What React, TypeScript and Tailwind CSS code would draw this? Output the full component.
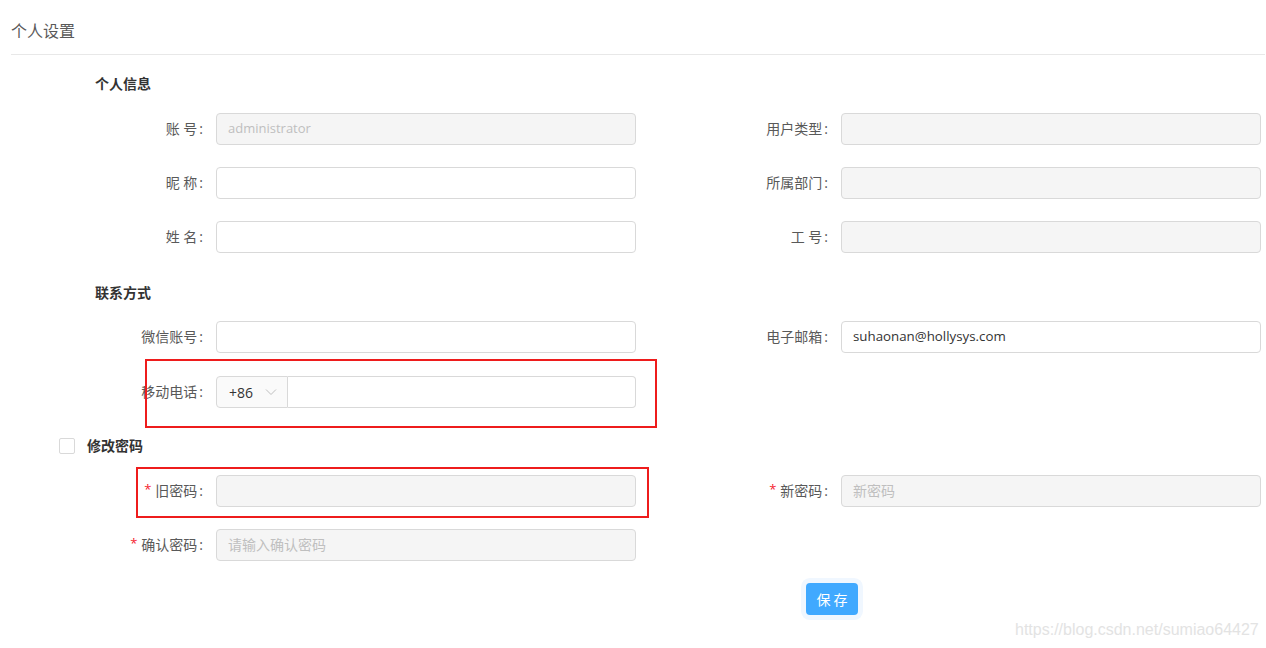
import React from "react";

const FONT = '"Open Sans", "Noto Sans CJK SC", sans-serif';

function Label({ text, required }: { text: string; required?: boolean }) {
  return (
    <div className="flex items-center justify-end pr-[13px] pb-[2px] text-[14px] text-[#595959] whitespace-pre">
      {required && <span className="text-[#f5222d] mr-[4px] text-[13px]">*</span>}
      <span>{text}</span>
      <span className="ml-[2px]">:</span>
    </div>
  );
}

function Input({
  disabled,
  value,
  placeholder,
  cjk,
}: {
  disabled?: boolean;
  value?: string;
  placeholder?: string;
  cjk?: boolean;
}) {
  return (
    <div
      className={
        "h-[32px] rounded-[4px] border border-[#d9d9d9] flex items-center px-[11px] " +
        (cjk ? "text-[14px] pb-[1px] " : "text-[13px] ") +
        (disabled ? "bg-[#f5f5f5]" : "bg-white")
      }
    >
      {value ? (
        <span className="text-[#333] text-[13.3px]">{value}</span>
      ) : placeholder ? (
        <span className="text-[#bfbfbf]">{placeholder}</span>
      ) : null}
    </div>
  );
}

function Row({ children, className = "" }: { children: React.ReactNode; className?: string }) {
  return <div className={"grid grid-cols-[216px_420px_205px_420px] h-[32px] " + className}>{children}</div>;
}

function Empty() {
  return <div />;
}

export default function App() {
  return (
    <div className="relative w-[1266px] h-[648px] bg-white overflow-hidden" style={{ fontFamily: FONT }}>
      <div className="ml-[11px] mr-[1px] pt-[20px] pb-[12px] border-b border-[#e8e8e8]">
        <div className="text-[16px] leading-[22px] text-[#595959]">个人设置</div>
      </div>

      <div className="mt-[19px] pl-[95px] text-[14px] leading-[20px] font-bold text-[#333]">个人信息</div>

      <Row className="mt-[19px]">
        <Label text="账 号" />
        <Input disabled placeholder="administrator" />
        <Label text="用户类型" />
        <Input disabled />
      </Row>
      <Row className="mt-[22px]">
        <Label text="昵 称" />
        <Input />
        <Label text="所属部门" />
        <Input disabled />
      </Row>
      <Row className="mt-[22px]">
        <Label text="姓 名" />
        <Input />
        <Label text="工 号" />
        <Input disabled />
      </Row>

      <div className="mt-[30px] pl-[95px] text-[14px] leading-[20px] font-bold text-[#333]">联系方式</div>

      <Row className="mt-[18px]">
        <Label text="微信账号" />
        <Input />
        <Label text="电子邮箱" />
        <Input value="suhaonan@hollysys.com" />
      </Row>
      <Row className="mt-[23px]">
        <Label text="移动电话" />
        <div className="flex h-[32px]">
          <div className="w-[72px] h-full flex items-center justify-between pl-[12px] pr-[10px] bg-[#fafafa] border border-[#d9d9d9] rounded-l-[4px] text-[14px] text-[#333]">
            <span>+86</span>
            <svg width="12" height="8" viewBox="0 0 12 8" fill="none">
              <path d="M1 1.5 L6 6.5 L11 1.5" stroke="#bfbfbf" strokeWidth="1" />
            </svg>
          </div>
          <div className="flex-1 h-full border border-l-0 border-[#d9d9d9] rounded-r-[4px] bg-white" />
        </div>
        <Empty />
        <Empty />
      </Row>

      <div className="mt-[28px] flex items-center h-[20px] pl-[59px]">
        <div className="w-[16px] h-[16px] border border-[#d9d9d9] rounded-[2px] bg-white" />
        <div className="ml-[12px] text-[14px] leading-[20px] font-bold text-[#333]">修改密码</div>
      </div>

      <Row className="mt-[19px]">
        <Label text="旧密码" required />
        <Input disabled />
        <Label text="新密码" required />
        <Input disabled cjk placeholder="新密码" />
      </Row>
      <Row className="mt-[22px]">
        <Label text="确认密码" required />
        <Input disabled cjk placeholder="请输入确认密码" />
        <Empty />
        <Empty />
      </Row>

      <div className="mt-[22px] flex pl-[806px]">
        <button className="w-[52px] h-[32px] rounded-[4px] bg-[#40a9ff] text-white text-[14px] shadow-[0_0_0_5px_#f0f7ff] tracking-[3px] pl-[3px]">
          保存
        </button>
      </div>

      {/* annotation boxes */}
      <div className="absolute left-[145px] top-[359px] w-[512px] h-[69px] border-2 border-[#ee1c1c]" />
      <div className="absolute left-[136px] top-[467px] w-[513px] h-[51px] border-2 border-[#ee1c1c]" />

      <div
        className="absolute left-[1015px] top-[620px] text-[16px] leading-[20px] text-[#e3e3e3]"
        style={{ fontFamily: '"Liberation Sans", Arial, sans-serif' }}
      >
        https://blog.csdn.net/sumiao64427
      </div>
    </div>
  );
}
